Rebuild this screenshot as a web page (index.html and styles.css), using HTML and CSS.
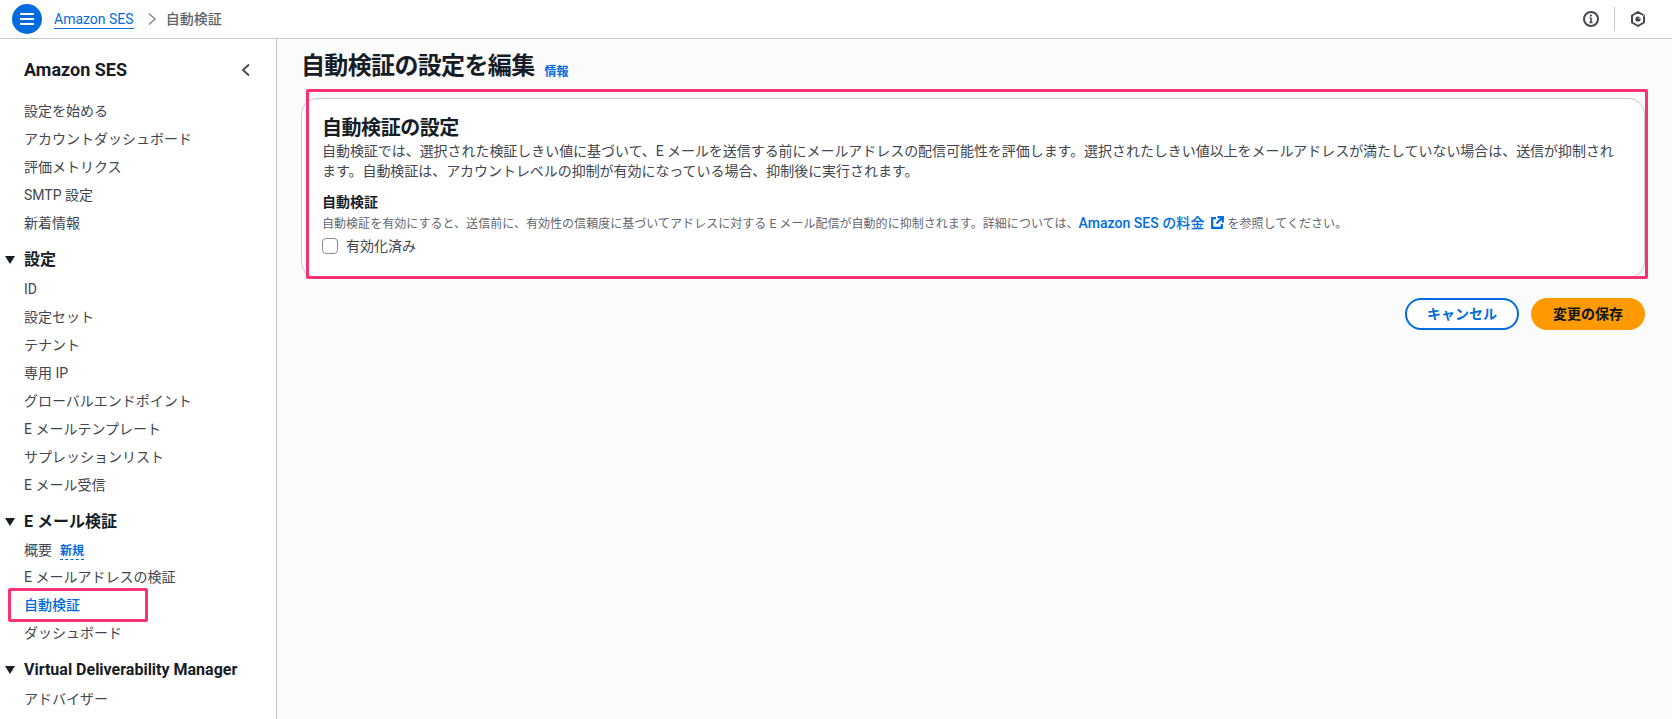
FILE: index.html
```html
<!DOCTYPE html>
<html lang="ja">
<head>
<meta charset="utf-8">
<title>自動検証の設定を編集</title>
<link rel="stylesheet" href="styles.css">
</head>
<body>
<header class="topbar">
  <button class="menu-btn" aria-label="メニュー">
    <svg width="16" height="14" viewBox="0 0 16 14"><path d="M1 2h14M1 7h14M1 12h14" stroke="#fff" stroke-width="2" fill="none"/></svg>
  </button>
  <nav class="crumbs">
    <a class="crumb-link">Amazon SES</a>
    <svg class="crumb-sep" width="10" height="14" viewBox="0 0 10 14"><path d="M2 1.5l6 5.5-6 5.5" stroke="#8c8c94" stroke-width="1.6" fill="none"/></svg>
    <span class="crumb-current">自動検証</span>
  </nav>
  <div class="top-icons">
    <svg class="top-icon" width="16" height="16" viewBox="0 0 16 16"><circle cx="8" cy="8" r="7" stroke="#424650" stroke-width="2" fill="none"/><path d="M8 7v4.5M6.4 11.5h3.2M6.6 7H8" stroke="#424650" stroke-width="1.6" fill="none"/><circle cx="8" cy="4.6" r="1.1" fill="#424650"/></svg>
    <span class="top-divider"></span>
    <svg class="top-icon" width="16" height="16" viewBox="0 0 16 16"><path d="M8 1l6 3.5v7L8 15l-6-3.5v-7z" stroke="#424650" stroke-width="2" fill="none" stroke-linejoin="round"/><circle cx="8" cy="8" r="2.6" fill="#424650"/><path d="M8.5 7.5l5.5-3" stroke="#fff" stroke-width="1"/></svg>
  </div>
</header>
<div class="layout">
  <aside class="sidebar">
    <div class="side-head">
      <span class="side-title">Amazon SES</span>
      <svg width="10" height="14" viewBox="0 0 10 14"><path d="M8 1.5L2 7l6 5.5" stroke="#424650" stroke-width="1.8" fill="none"/></svg>
    </div>
    <ul class="nav-list">
      <li>設定を始める</li>
      <li>アカウントダッシュボード</li>
      <li>評価メトリクス</li>
      <li>SMTP 設定</li>
      <li>新着情報</li>
    </ul>
    <div class="nav-section"><span class="tri"></span>設定</div>
    <ul class="nav-list">
      <li>ID</li>
      <li>設定セット</li>
      <li>テナント</li>
      <li>専用 IP</li>
      <li>グローバルエンドポイント</li>
      <li>E メールテンプレート</li>
      <li>サプレッションリスト</li>
      <li>E メール受信</li>
    </ul>
    <div class="nav-section"><span class="tri"></span>E メール検証</div>
    <ul class="nav-list">
      <li class="row-badge">概要<span class="badge-new">新規</span></li>
      <li>E メールアドレスの検証</li>
      <li class="active">自動検証<span class="mark-nav"></span></li>
      <li>ダッシュボード</li>
    </ul>
    <div class="nav-section"><span class="tri"></span>Virtual Deliverability Manager</div>
    <ul class="nav-list">
      <li>アドバイザー</li>
    </ul>
  </aside>
  <main class="main">
    <div class="page-head">
      <h1>自動検証の設定を編集</h1>
      <a class="info">情報</a>
    </div>
    <section class="card">
      <span class="mark-card"></span>
      <h2>自動検証の設定</h2>
      <p class="card-desc">自動検証では、選択された検証しきい値に基づいて、E メールを送信する前にメールアドレスの配信可能性を評価します。選択されたしきい値以上をメールアドレスが満たしていない場合は、送信が抑制されます。自動検証は、アカウントレベルの抑制が有効になっている場合、抑制後に実行されます。</p>
      <div class="field-label">自動検証</div>
      <div class="field-desc">自動検証を有効にすると、送信前に、有効性の信頼度に基づいてアドレスに対する E メール配信が自動的に抑制されます。詳細については、<a class="ext">Amazon SES の料金<svg class="ext-icon" width="14" height="14" viewBox="0 0 14 14"><path d="M6 2.2H2.2v9.6h9.6V8M7.5 1.2h5.3v5.3M12.5 1.5L6.5 7.5" stroke="#006ce0" stroke-width="2.2" fill="none"/></svg></a> を参照してください。</div>
      <label class="check"><span class="box"></span>有効化済み</label>
    </section>
    <div class="actions">
      <button class="btn btn-cancel">キャンセル</button>
      <button class="btn btn-save">変更の保存</button>
    </div>
  </main>
</div>
</body>
</html>
```
FILE: styles.css
```css
* { box-sizing: border-box; }
html, body { margin: 0; height: 100%; overflow: hidden; }
body {
  font-family: Roboto, "Noto Sans CJK JP", sans-serif;
  font-size: 14px;
  line-height: 20px;
  color: #424650;
  background: #fff;
}
.topbar {
  height: 39px;
  display: flex;
  align-items: center;
  padding: 0 26px 0 12px;
  border-bottom: 1px solid #c6c6cd;
  background: #fff;
  margin-top: 0;
}
.menu-btn {
  width: 30px;
  height: 30px;
  border: 0;
  border-radius: 50%;
  background: #006ce0;
  display: flex;
  align-items: center;
  justify-content: center;
  padding: 0;
}
.crumbs { display: flex; align-items: center; margin-left: 12px; }
.crumb-link { color: #006ce0; border-bottom: 1px solid #006ce0; line-height: 18px; }
.crumb-sep { margin: 0 9px 0 13px; }
.crumb-current { color: #5f6470; font-weight: 500; }
.top-icons { margin-left: auto; display: flex; align-items: center; }
.top-divider { width: 1px; height: 24px; background: #c6c6cd; margin: 0 15px; }
.layout { display: flex; height: 680px; }
.sidebar {
  width: 277px;
  flex: none;
  border-right: 1px solid #c6c6cd;
  padding: 0 0 0 24px;
  overflow: hidden;
  background: #fff;
}
.side-head {
  display: flex;
  justify-content: space-between;
  align-items: center;
  height: 24px;
  margin: 19px 25px 15px 0;
}
.side-title { font-size: 18px; font-weight: 700; color: #161d26; }
.nav-list { list-style: none; margin: 0; padding: 0; }
.nav-list li { height: 28px; line-height: 28px; position: relative; white-space: nowrap; }
.nav-list li.row-badge { height: 26px; line-height: 26px; }
.nav-list li.active { color: #006ce0; font-weight: 500; }
.nav-section {
  position: relative;
  font-size: 16px;
  font-weight: 700;
  color: #161d26;
  height: 24px;
  line-height: 24px;
  margin: 11px 0 3px;
}
.tri {
  position: absolute;
  left: -19px;
  top: 8px;
  border-style: solid;
  border-width: 8px 5px 0;
  border-color: #161d26 transparent transparent;
}
.badge-new {
  margin-left: 8px;
  font-size: 12px;
  font-weight: 700;
  color: #006ce0;
  border-bottom: 1px dashed #006ce0;
  line-height: 16px;
  display: inline-block;
}
.mark-nav {
  position: absolute;
  left: -16px;
  top: -3px;
  width: 140px;
  height: 34px;
  border: 3px solid #f93272;
  border-radius: 2px;
  pointer-events: none;
}
.main { flex: 1; background: #fbfbfc; padding: 0 27px 0 24px; min-width: 0; }
.page-head { display: flex; align-items: center; height: 32px; margin: 11px 0 16px; }
h1 { margin: 0; font-size: 24px; line-height: 32px; font-weight: 700; color: #161d26; letter-spacing: -0.65px; }
.info { margin-left: 10px; margin-top: 12px; font-size: 12px; font-weight: 700; color: #006ce0; }
.card {
  position: relative;
  height: 180px;
  background: #fff;
  border: 1px solid #c6c6cd;
  border-radius: 16px;
  padding: 17px 20px;
}
.mark-card {
  position: absolute;
  left: 4px;
  top: -10px;
  right: -4px;
  bottom: -2px;
  border: 3px solid #f93272;
  border-radius: 2px;
  pointer-events: none;
}
h2 { margin: 0; font-size: 20px; line-height: 25px; font-weight: 700; color: #161d26; letter-spacing: -0.45px; }
.card-desc { margin: 0 0 11px; color: #424650; letter-spacing: -0.05px; }
.field-label { font-weight: 700; color: #161d26; line-height: 20px; }
.field-desc { font-size: 12px; line-height: 22px; color: #656871; white-space: nowrap; letter-spacing: 0.04px; }
.ext { color: #006ce0; font-size: 14px; font-weight: 500; }
.ext-icon { margin-left: 6px; vertical-align: -2px; }
.check { display: flex; align-items: center; color: #424650; line-height: 20px; margin-top: 1px; }
.box {
  width: 16px;
  height: 16px;
  border: 1px solid #8c8c94;
  border-radius: 4px;
  background: #fff;
  margin-right: 8px;
}
.actions { display: flex; justify-content: flex-end; gap: 12px; margin-top: 20px; }
.btn {
  height: 32px;
  border-radius: 20px;
  font: 700 14px/20px Roboto, "Noto Sans CJK JP", sans-serif;
  padding: 0;
}
.btn-cancel { width: 114px; background: #fff; color: #006ce0; border: 2px solid #006ce0; }
.btn-save { width: 114px; background: #ff9900; color: #0f141a; border: 0; }
```
